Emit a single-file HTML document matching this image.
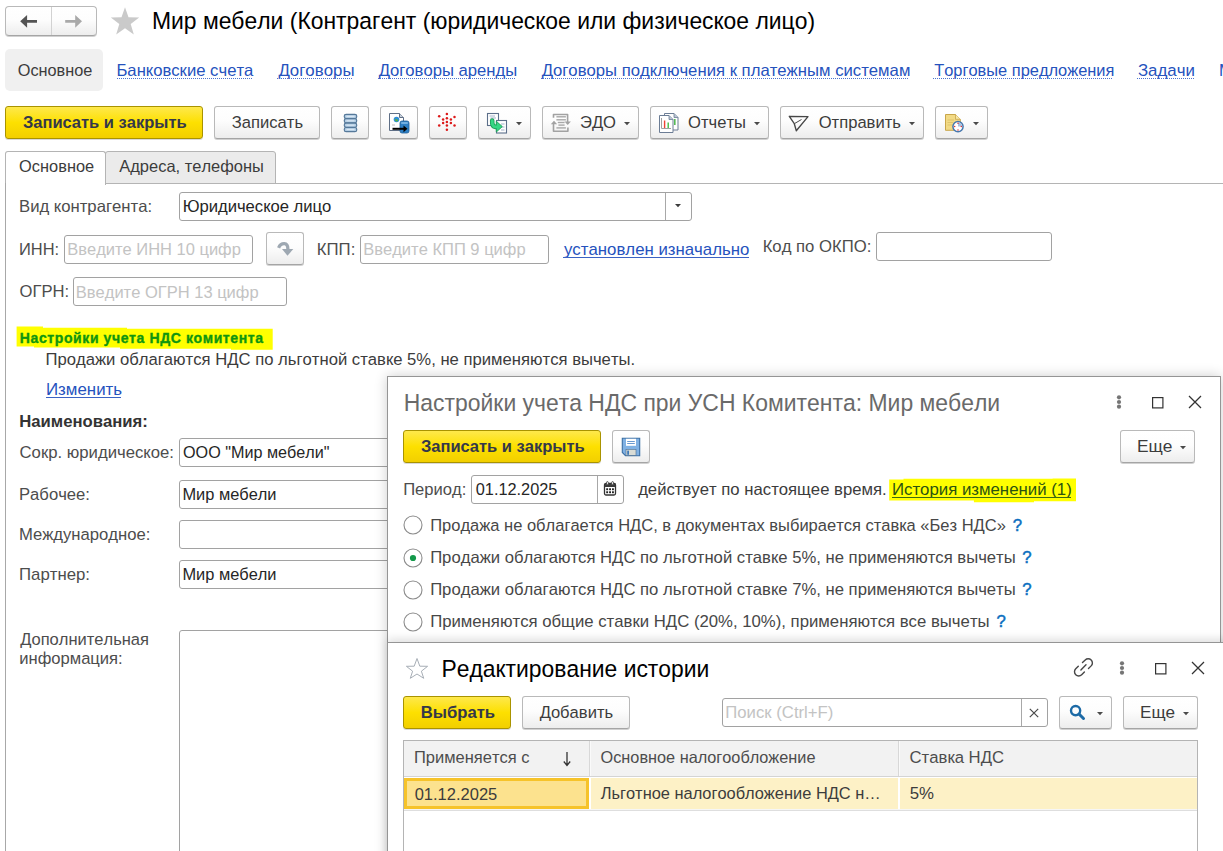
<!DOCTYPE html><html><head><meta charset="utf-8"><style>
*{margin:0;padding:0}
html,body{width:1223px;height:851px;overflow:hidden;background:#fff;position:relative}
body{font-family:"Liberation Sans",sans-serif}
.t{position:absolute;line-height:20px;white-space:nowrap;font-kerning:none}
.bn{position:absolute;box-sizing:border-box;border:1px solid #b9b9b9;border-bottom-color:#a5a5a5;border-radius:3px;background:linear-gradient(#ffffff 0%,#fdfdfd 45%,#ededed 100%);box-shadow:0 1px 0 rgba(0,0,0,0.18)}
.by{position:absolute;box-sizing:border-box;border:1px solid #a99300;border-radius:3px;background:linear-gradient(#fee84c 0%,#fde000 50%,#f2cf00 100%);box-shadow:0 1px 0 rgba(0,0,0,0.15)}
.fld{position:absolute;box-sizing:border-box;border:1px solid #a2a2a2;border-radius:3px;background:#fff}
.dlg{position:absolute;box-sizing:border-box;border:1px solid #959595;background:#fff;box-shadow:0 0 12px rgba(0,0,0,0.2)}
.dlg2{position:absolute;box-sizing:border-box;border:1px solid #959595;background:#fff;box-shadow:0 -3px 9px rgba(0,0,0,0.13)}
svg{position:absolute;overflow:visible}
</style></head><body>
<div class="bn" style="position:absolute;left:5px;top:6px;width:92px;height:30px;border-radius:4px"></div>
<div style="position:absolute;left:51px;top:7px;width:1px;height:28px;background:#d2d2d2"></div>
<svg style="position:absolute;left:19px;top:14px;" width="20" height="15" viewBox="0 0 20 15"><path d="M1.2 7.3 L8.1 1 L8.1 5.9 L18 5.9 L18 8.7 L8.1 8.7 L8.1 13.8 Z" fill="#545454"/></svg>
<svg style="position:absolute;left:64px;top:14px;" width="20" height="15" viewBox="0 0 20 15"><path d="M18 7.3 L11.2 1 L11.2 5.9 L1.2 5.9 L1.2 8.7 L11.2 8.7 L11.2 13.8 Z" fill="#a9a9a9"/></svg>
<svg style="position:absolute;left:110px;top:7px;" width="30" height="28" viewBox="0 0 30 28"><path d="M15 0.3 L18.5 10.2 L29.2 10.4 L20.7 16.9 L23.8 27.5 L15 21.2 L6.2 27.5 L9.3 16.9 L0.8 10.4 L11.5 10.2 Z" fill="#cacaca"/></svg>
<div class="t" style="left:151.92px;top:11px;font-size:22.911px;color:#000;font-weight:400;transform:scaleY(1.08);transform-origin:0 18px;">Мир мебели (Контрагент (юридическое или физическое лицо)</div>
<div style="position:absolute;left:5px;top:49px;width:98px;height:42px;background:#f0f0f0;border-radius:5px"></div>
<div class="t" style="left:17.73px;top:60px;font-size:16.302px;color:#3c3c3c;font-weight:400;">Основное</div>
<div class="t" style="left:116.43px;top:61px;font-size:16.681px;color:#2552bd;font-weight:400;">Банковские счета</div>
<div style="position:absolute;left:117px;top:78px;width:136px;height:1px;background-image:linear-gradient(90deg,#4d74d0 50%,transparent 50%);background-size:2px 1px"></div>
<div class="t" style="left:278.48px;top:61px;font-size:16.847px;color:#2552bd;font-weight:400;">Договоры</div>
<div style="position:absolute;left:277px;top:78px;width:76px;height:1px;background-image:linear-gradient(90deg,#4d74d0 50%,transparent 50%);background-size:2px 1px"></div>
<div class="t" style="left:378.68px;top:61px;font-size:16.661px;color:#2552bd;font-weight:400;">Договоры аренды</div>
<div style="position:absolute;left:378px;top:78px;width:138px;height:1px;background-image:linear-gradient(90deg,#4d74d0 50%,transparent 50%);background-size:2px 1px"></div>
<div class="t" style="left:541.68px;top:61px;font-size:16.715px;color:#2552bd;font-weight:400;">Договоры подключения к платежным системам</div>
<div style="position:absolute;left:541px;top:78px;width:368px;height:1px;background-image:linear-gradient(90deg,#4d74d0 50%,transparent 50%);background-size:2px 1px"></div>
<div class="t" style="left:934.23px;top:60px;font-size:16.418px;color:#2552bd;font-weight:400;">Торговые предложения</div>
<div style="position:absolute;left:933px;top:78px;width:180px;height:1px;background-image:linear-gradient(90deg,#4d74d0 50%,transparent 50%);background-size:2px 1px"></div>
<div class="t" style="left:1137.95px;top:61px;font-size:16.873px;color:#2552bd;font-weight:400;">Задачи</div>
<div style="position:absolute;left:1137px;top:78px;width:57px;height:1px;background-image:linear-gradient(90deg,#4d74d0 50%,transparent 50%);background-size:2px 1px"></div>
<div class="t" style="left:1219.03px;top:61px;font-size:16.750px;color:#2552bd;font-weight:400;">Мониторинг</div>
<div class="by" style="position:absolute;left:5px;top:106px;width:198px;height:33px;"></div>
<div class="t" style="left:22.93px;top:113px;font-size:16.532px;color:#34384a;font-weight:700;">Записать и закрыть</div>
<div class="bn" style="position:absolute;left:214px;top:106px;width:106px;height:33px;"></div>
<div class="t" style="left:231.86px;top:113px;font-size:16.581px;color:#3c3c3c;font-weight:400;">Записать</div>
<div class="bn" style="position:absolute;left:331px;top:106px;width:38px;height:33px;"></div>
<div class="bn" style="position:absolute;left:380px;top:106px;width:38px;height:33px;"></div>
<div class="bn" style="position:absolute;left:429px;top:106px;width:38px;height:33px;"></div>
<div class="bn" style="position:absolute;left:478px;top:106px;width:53px;height:33px;"></div>
<div class="bn" style="position:absolute;left:542px;top:106px;width:97px;height:33px;"></div>
<div class="bn" style="position:absolute;left:650px;top:106px;width:119px;height:33px;"></div>
<div class="bn" style="position:absolute;left:780px;top:106px;width:144px;height:33px;"></div>
<div class="bn" style="position:absolute;left:935px;top:106px;width:53px;height:33px;"></div>
<div class="t" style="left:579.95px;top:113px;font-size:16.629px;color:#3c3c3c;font-weight:400;">ЭДО</div>
<div class="t" style="left:688.01px;top:113px;font-size:16.602px;color:#3c3c3c;font-weight:400;">Отчеты</div>
<div class="t" style="left:818.71px;top:113px;font-size:16.591px;color:#3c3c3c;font-weight:400;">Отправить</div>
<svg style="position:absolute;left:516px;top:122px;" width="6" height="4" viewBox="0 0 6 4"><path d="M0 0 H6 L3 3.2 Z" fill="#4a4a4a"/></svg>
<svg style="position:absolute;left:624px;top:122px;" width="6" height="4" viewBox="0 0 6 4"><path d="M0 0 H6 L3 3.2 Z" fill="#4a4a4a"/></svg>
<svg style="position:absolute;left:754px;top:122px;" width="6" height="4" viewBox="0 0 6 4"><path d="M0 0 H6 L3 3.2 Z" fill="#4a4a4a"/></svg>
<svg style="position:absolute;left:909px;top:122px;" width="6" height="4" viewBox="0 0 6 4"><path d="M0 0 H6 L3 3.2 Z" fill="#4a4a4a"/></svg>
<svg style="position:absolute;left:973px;top:122px;" width="6" height="4" viewBox="0 0 6 4"><path d="M0 0 H6 L3 3.2 Z" fill="#4a4a4a"/></svg>
<svg style="position:absolute;left:343px;top:113px;" width="15" height="20" viewBox="0 0 15 20"><rect x="1.3" y="1.3" width="12.4" height="4.2" rx="1.8" fill="#b3cde3" stroke="#56799a" stroke-width="1.2"/><path d="M3.5 3.4 H11.5" stroke="#dfeaf5" stroke-width="1"/><rect x="1.3" y="5.7" width="12.4" height="4.2" rx="1.8" fill="#b3cde3" stroke="#56799a" stroke-width="1.2"/><path d="M3.5 7.8 H11.5" stroke="#dfeaf5" stroke-width="1"/><rect x="1.3" y="10.1" width="12.4" height="4.2" rx="1.8" fill="#b3cde3" stroke="#56799a" stroke-width="1.2"/><path d="M3.5 12.2 H11.5" stroke="#dfeaf5" stroke-width="1"/><rect x="1.3" y="14.5" width="12.4" height="4.2" rx="1.8" fill="#b3cde3" stroke="#56799a" stroke-width="1.2"/><path d="M3.5 16.6 H11.5" stroke="#dfeaf5" stroke-width="1"/></svg>
<svg style="position:absolute;left:388px;top:112px;" width="23" height="22" viewBox="0 0 23 22"><path d="M1.5 1.5 H11.5 L15.5 5.5 V18.5 H1.5 Z" fill="#fff" stroke="#5f6f86" stroke-width="1"/><path d="M11.5 1.5 V5.5 H15.5" fill="#c8d0da" stroke="#5f6f86" stroke-width="1"/><circle cx="8.5" cy="7.5" r="2.8" fill="#2f8fd8"/><path d="M7 6.5 Q8.5 8 10 7.2 L9.6 9.5 Q8 9.8 7.2 8.8Z" fill="#5cb33a"/><path d="M4 13 H7" stroke="#aaa" stroke-width="0.8"/><rect x="12" y="9" width="9" height="12" rx="2" fill="#2d7fc4" stroke="#1e5f99" stroke-width="0.8"/><path d="M13.2 11 H19.8" stroke="#9fd0f5" stroke-width="1.2"/><path d="M4.5 16.8 H16.5" stroke="#000" stroke-width="2"/><path d="M15.5 13.5 L19.5 16.8 L15.5 20.2 Z" fill="#000"/></svg>
<svg style="position:absolute;left:0px;top:0px;" width="1" height="1" viewBox="0 0 1 1"><circle cx="446.9" cy="114.1" r="1.25" fill="#dc1a1a"/><circle cx="439.2" cy="116.3" r="1.25" fill="#dc1a1a"/><circle cx="454.5" cy="116.9" r="1.25" fill="#dc1a1a"/><circle cx="443.1" cy="119.4" r="1.25" fill="#dc1a1a"/><circle cx="446.9" cy="118.2" r="1.25" fill="#dc1a1a"/><circle cx="450.9" cy="119.4" r="1.25" fill="#dc1a1a"/><circle cx="443.1" cy="123.1" r="1.25" fill="#dc1a1a"/><circle cx="446.9" cy="121.9" r="1.25" fill="#dc1a1a"/><circle cx="450.9" cy="123.1" r="1.25" fill="#dc1a1a"/><circle cx="439.2" cy="125.6" r="1.25" fill="#dc1a1a"/><circle cx="454.5" cy="125.6" r="1.25" fill="#dc1a1a"/><circle cx="446.9" cy="125.6" r="1.25" fill="#dc1a1a"/><circle cx="446.9" cy="129.7" r="1.25" fill="#dc1a1a"/></svg>
<svg style="position:absolute;left:486px;top:112px;" width="22" height="22" viewBox="0 0 22 22"><rect x="1.5" y="1.5" width="11" height="12" fill="#fff" stroke="#5c6f8a" stroke-width="1.1"/><path d="M3.5 4 H9 M4.5 6 H10" stroke="#8aa0bb" stroke-width="0.8"/><rect x="10.5" y="8.5" width="10" height="12.5" fill="#fff" stroke="#5c6f8a" stroke-width="1.1"/><path d="M15 12 H18.5 M15 15 H18.5 M15 18 H18.5" stroke="#8aa0bb" stroke-width="0.8"/><path d="M6.2 8.6 Q5.8 14.6 9.6 14.9 L11.5 14.9" fill="none" stroke="#1f9f5a" stroke-width="4.6" stroke-linecap="round"/><path d="M10.3 9.2 L16.3 14.6 L10.3 20 Z" fill="#35d784" stroke="#1f9f5a" stroke-width="0.9" stroke-linejoin="round"/><path d="M6.2 8.6 Q5.8 14.6 9.6 14.9 L11.8 14.9" fill="none" stroke="#35d784" stroke-width="2.8" stroke-linecap="round"/></svg>
<svg style="position:absolute;left:549px;top:112px;" width="24" height="22" viewBox="0 0 24 22"><g fill="none" stroke="#a2a2a2" stroke-width="1.6" stroke-linejoin="round"><path d="M4.5 5.8 V2.5 H18.6 V9.9"/><path d="M4.5 12 V19.2 H18.9 V15.6"/></g><path d="M15.5 9.6 H21.9 L18.7 12.9 Z" fill="#a2a2a2"/><path d="M1.8 12.2 L5 8.8 L8.2 12.2 Z" fill="#a2a2a2"/><g stroke="#a8a8a8" stroke-width="1.4"><path d="M7.4 4.8 H16.9"/><path d="M7.4 7.8 H16.9"/><path d="M8.8 10.5 H15.6"/><path d="M9.4 13.1 H15.6"/><path d="M7.4 15.9 H16.9"/></g></svg>
<svg style="position:absolute;left:658px;top:112px;" width="22" height="22" viewBox="0 0 22 22"><path d="M6.5 1.5 H16 L20 5.5 V18 H6.5 Z" fill="#fff" stroke="#6c7d95" stroke-width="1"/><path d="M16 1.5 V5.5 H20" fill="#b9c4d2" stroke="#6c7d95" stroke-width="0.8"/><path d="M1.5 3.5 H11 L15 7.5 V20.5 H1.5 Z" fill="#fff" stroke="#6c7d95" stroke-width="1"/><path d="M11 3.5 V7.5 H15" fill="#b9c4d2" stroke="#6c7d95" stroke-width="0.8"/><path d="M3.5 6 V16.5 H13" fill="none" stroke="#a0a0a0" stroke-width="1"/><path d="M6.6 8.5 V16" stroke="#ee4433" stroke-width="1.4"/><path d="M10.2 10.5 V16" stroke="#44bb44" stroke-width="1.4"/><path d="M16.8 7 V13" stroke="#55bb55" stroke-width="1.6"/></svg>
<svg style="position:absolute;left:787px;top:114px;" width="24" height="19" viewBox="0 0 24 19"><path d="M2.3 2.3 L21 2.6 L9.3 16.8 L7.3 9.7 Z" fill="none" stroke="#474747" stroke-width="1.35" stroke-linejoin="round"/><path d="M7.3 9.7 L14.5 5.5" stroke="#474747" stroke-width="1"/></svg>
<svg style="position:absolute;left:944px;top:113px;" width="22" height="22" viewBox="0 0 22 22"><path d="M1.5 1.5 H11.5 L16.3 6.3 V17.3 H1.5 Z" fill="#f2da85" stroke="#c8a54a" stroke-width="1"/><path d="M11.5 1.5 V6.3 H16.3" fill="#f7e7a8" stroke="#c8a54a" stroke-width="0.8"/><path d="M3.5 7 H10 M3.5 9.5 H9 M3.5 12 H8" stroke="#d9bf66" stroke-width="0.8"/><circle cx="14" cy="13.6" r="5.1" fill="#fff" stroke="#4677ad" stroke-width="1.5"/><path d="M14 13.6 V9.6 A4 4 0 0 1 18 13.6 Z" fill="#a5c0e0"/><circle cx="14" cy="10.3" r="0.75" fill="#e03030"/><circle cx="14" cy="16.9" r="0.75" fill="#e03030"/><circle cx="10.7" cy="13.6" r="0.75" fill="#e03030"/><circle cx="17.3" cy="13.6" r="0.75" fill="#e03030"/></svg>
<div style="position:absolute;left:105px;top:151px;width:171px;height:33px;background:#ebebeb;border:1px solid #b4b4b4;box-sizing:border-box;border-radius:3px 3px 0 0"></div>
<div style="position:absolute;left:275px;top:183px;width:948px;height:1px;background:#b4b4b4"></div>
<div style="position:absolute;left:5px;top:151px;width:101px;height:34px;background:#fff;border:1px solid #b4b4b4;border-bottom:none;box-sizing:border-box;border-radius:3px 3px 0 0"></div>
<div style="position:absolute;left:5px;top:183px;width:1px;height:668px;background:#a8a8a8"></div>
<div class="t" style="left:19.12px;top:156px;font-size:16.391px;color:#3c3c3c;font-weight:400;">Основное</div>
<div class="t" style="left:119.27px;top:156px;font-size:16.481px;color:#3c3c3c;font-weight:400;">Адреса, телефоны</div>
<div class="t" style="left:19.03px;top:197px;font-size:16.703px;color:#4d4d4d;font-weight:400;">Вид контрагента:</div>
<div class="fld" style="position:absolute;left:179px;top:192px;width:513px;height:29px;"></div>
<div style="position:absolute;left:665px;top:193px;width:1px;height:27px;background:#a8a8a8"></div>
<svg style="position:absolute;left:675px;top:204px;" width="6" height="4" viewBox="0 0 6 4"><path d="M0 0 H6 L3 3.2 Z" fill="#3c3c3c"/></svg>
<div class="t" style="left:182.63px;top:197px;font-size:16.646px;color:#262626;font-weight:400;">Юридическое лицо</div>
<div class="t" style="left:19.05px;top:239px;font-size:16.449px;color:#4d4d4d;font-weight:400;">ИНН:</div>
<div class="fld" style="position:absolute;left:64px;top:235px;width:189px;height:29px;"></div>
<div class="t" style="left:67.25px;top:239px;font-size:16.491px;color:#c3c3c3;font-weight:400;">Введите ИНН 10 цифр</div>
<div class="bn" style="position:absolute;left:266px;top:232px;width:38px;height:33px;"></div>
<svg style="position:absolute;left:277px;top:240px;" width="18" height="17" viewBox="0 0 18 17"><path d="M1.6 7.8 Q3.4 3.6 7.3 3.7 Q10.9 3.9 10.9 9.2" fill="none" stroke="#9ea8b2" stroke-width="3.3"/><path d="M5 8.9 L16.3 8.9 L10.5 15.8 Z" fill="#9ea8b2"/></svg>
<div class="t" style="left:316.83px;top:240px;font-size:16.757px;color:#4d4d4d;font-weight:400;">КПП:</div>
<div class="fld" style="position:absolute;left:360px;top:235px;width:189px;height:29px;"></div>
<div class="t" style="left:363.24px;top:240px;font-size:16.535px;color:#c3c3c3;font-weight:400;">Введите КПП 9 цифр</div>
<div class="t" style="left:563.96px;top:240px;font-size:16.808px;color:#2552bd;font-weight:400;">установлен изначально</div>
<div style="position:absolute;left:563px;top:257px;width:186px;height:1px;background:#3a62c4"></div>
<div class="t" style="left:762.63px;top:237px;font-size:16.696px;color:#4d4d4d;font-weight:400;">Код по ОКПО:</div>
<div class="fld" style="position:absolute;left:876px;top:232px;width:176px;height:29px;"></div>
<div class="t" style="left:19.51px;top:282px;font-size:16.645px;color:#4d4d4d;font-weight:400;">ОГРН:</div>
<div class="fld" style="position:absolute;left:73px;top:277px;width:214px;height:29px;"></div>
<div class="t" style="left:75.84px;top:282px;font-size:16.519px;color:#c3c3c3;font-weight:400;">Введите ОГРН 13 цифр</div>
<svg style="position:absolute;left:0px;top:0px;" width="1" height="1" viewBox="0 0 1 1"><path d="M16.6 326.6 H43 V327.7 H127 V328.8 H272.7 V349.8 H231 V348.7 H120 V347.6 H34 V346.5 H16.6 Z" fill="#ffff00"/></svg>
<div class="t" style="left:19.86px;top:328px;font-size:14.000px;color:#0f960f;font-weight:700;letter-spacing:0.6px;-webkit-text-stroke:0.35px #0f960f;">Настройки учета НДС комитента</div>
<div class="t" style="left:45.45px;top:350px;font-size:16.662px;color:#3c3c3c;font-weight:400;">Продажи облагаются НДС по льготной ставке 5%, не применяются вычеты.</div>
<div class="t" style="left:46.01px;top:380px;font-size:16.888px;color:#2552bd;font-weight:400;">Изменить</div>
<div style="position:absolute;left:46px;top:397px;width:75px;height:1px;background:#3a62c4"></div>
<div class="t" style="left:19.28px;top:412px;font-size:16.682px;color:#333;font-weight:700;">Наименования:</div>
<div class="t" style="left:19.55px;top:443px;font-size:16.719px;color:#4d4d4d;font-weight:400;">Сокр. юридическое:</div>
<div class="fld" style="position:absolute;left:179px;top:438px;width:252px;height:29px;"></div>
<div class="t" style="left:183.03px;top:442px;font-size:16.162px;color:#262626;font-weight:400;">ООО &quot;Мир мебели&quot;</div>
<div class="t" style="left:19.03px;top:485px;font-size:16.651px;color:#4d4d4d;font-weight:400;">Рабочее:</div>
<div class="fld" style="position:absolute;left:179px;top:480px;width:252px;height:29px;"></div>
<div class="t" style="left:182.45px;top:484px;font-size:16.408px;color:#262626;font-weight:400;">Мир мебели</div>
<div class="t" style="left:19.03px;top:525px;font-size:16.669px;color:#4d4d4d;font-weight:400;">Международное:</div>
<div class="fld" style="position:absolute;left:179px;top:520px;width:252px;height:29px;"></div>
<div class="t" style="left:19.04px;top:565px;font-size:16.777px;color:#4d4d4d;font-weight:400;">Партнер:</div>
<div class="fld" style="position:absolute;left:179px;top:560px;width:252px;height:29px;"></div>
<div class="t" style="left:182.45px;top:564px;font-size:16.408px;color:#262626;font-weight:400;">Мир мебели</div>
<div class="t" style="left:20.28px;top:630px;font-size:16.534px;color:#4d4d4d;font-weight:400;">Дополнительная</div>
<div class="t" style="left:19.25px;top:649px;font-size:16.580px;color:#4d4d4d;font-weight:400;">информация:</div>
<div class="fld" style="position:absolute;left:179px;top:630px;width:252px;height:271px;"></div>
<div class="dlg" style="position:absolute;left:387px;top:376px;width:834px;height:525px;"></div>
<div class="t" style="left:403.72px;top:393px;font-size:22.943px;color:#6a6a6a;font-weight:400;transform:scaleY(1.08);transform-origin:0 18px;">Настройки учета НДС при УСН Комитента: Мир мебели</div>
<svg style="position:absolute;left:1115px;top:395px;" width="8" height="14" viewBox="0 0 8 14"><circle cx="4" cy="2.3" r="2.1" fill="#757575"/><circle cx="4" cy="7" r="2.1" fill="#757575"/><circle cx="4" cy="11.7" r="2.1" fill="#757575"/></svg>
<svg style="position:absolute;left:1150px;top:395px;" width="15" height="15" viewBox="0 0 15 15"><rect x="2.6" y="2.6" width="10.3" height="10.3" fill="none" stroke="#333" stroke-width="1.2"/></svg>
<svg style="position:absolute;left:1187px;top:394px;" width="16" height="16" viewBox="0 0 16 16"><path d="M2 2 L14 14 M14 2 L2 14" stroke="#333" stroke-width="1.25"/></svg>
<div class="by" style="position:absolute;left:403px;top:430px;width:198px;height:33px;"></div>
<div class="t" style="left:420.93px;top:437px;font-size:16.522px;color:#34384a;font-weight:700;">Записать и закрыть</div>
<div class="bn" style="position:absolute;left:612px;top:430px;width:38px;height:33px;"></div>
<svg style="position:absolute;left:621px;top:437px;" width="20" height="20" viewBox="0 0 20 20"><path d="M1.3 1.3 H18.7 V18.7 H4.5 L1.3 15.5 Z" fill="#80b1e3" stroke="#3b6fa5" stroke-width="1.1"/><rect x="5" y="1.8" width="10" height="7" fill="#fff"/><path d="M6.2 4.5 H13.8 M6.2 6.5 H13.8" stroke="#6b9ad0" stroke-width="1"/><rect x="5" y="12.3" width="10" height="6" fill="#d9dcd6" stroke="#4a6b8e" stroke-width="0.6"/><rect x="6.2" y="13.6" width="1.8" height="4.2" fill="#3f79b8"/></svg>
<div class="bn" style="position:absolute;left:1120px;top:430px;width:75px;height:33px;"></div>
<div class="t" style="left:1136.88px;top:436px;font-size:17.349px;color:#3c3c3c;font-weight:400;">Еще</div>
<svg style="position:absolute;left:1180px;top:446px;" width="6" height="4" viewBox="0 0 6 4"><path d="M0 0 H6 L3 3.2 Z" fill="#4a4a4a"/></svg>
<div class="t" style="left:403.16px;top:480px;font-size:16.590px;color:#4d4d4d;font-weight:400;">Период:</div>
<div class="fld" style="position:absolute;left:471px;top:475px;width:153px;height:29px;"></div>
<div style="position:absolute;left:597px;top:476px;width:1px;height:27px;background:#a8a8a8"></div>
<div class="t" style="left:475.76px;top:479px;font-size:16.329px;color:#262626;font-weight:400;">01.12.2025</div>
<svg style="position:absolute;left:603px;top:481px;" width="14" height="15" viewBox="0 0 14 15"><rect x="1.5" y="2.5" width="11" height="11.5" rx="1.5" fill="#fff" stroke="#333" stroke-width="1.3"/><rect x="1.5" y="2.5" width="11" height="3.5" fill="#3a3a3a"/><rect x="3.5" y="0.6" width="1.8" height="3.2" rx="0.9" fill="#fff" stroke="#333" stroke-width="0.8"/><rect x="8.7" y="0.6" width="1.8" height="3.2" rx="0.9" fill="#fff" stroke="#333" stroke-width="0.8"/><rect x="3.2" y="7.3" width="1.9" height="1.9" fill="#222"/><rect x="3.2" y="10.3" width="1.9" height="1.9" fill="#222"/><rect x="6.1" y="7.3" width="1.9" height="1.9" fill="#222"/><rect x="6.1" y="10.3" width="1.9" height="1.9" fill="#222"/><rect x="9.0" y="7.3" width="1.9" height="1.9" fill="#222"/><rect x="9.0" y="10.3" width="1.9" height="1.9" fill="#222"/></svg>
<div class="t" style="left:638.14px;top:480px;font-size:16.717px;color:#3c3c3c;font-weight:400;">действует по настоящее время.</div>
<svg style="position:absolute;left:0px;top:0px;" width="1" height="1" viewBox="0 0 1 1"><path d="M889.2 479.5 H903.5 V478.7 H1052.6 V478.4 H1076 V501.3 H1034 V502.2 H973.9 V500.5 H889.2 Z" fill="#ffff00"/></svg>
<div class="t" style="left:891.92px;top:480px;font-size:16.806px;color:#2b5410;font-weight:400;">История изменений (1)</div>
<div style="position:absolute;left:892px;top:497px;width:179px;height:1px;background:#3d6a12"></div>
<svg style="position:absolute;left:403.4px;top:515.4px;" width="20" height="20" viewBox="0 0 20 20"><circle cx="10" cy="10" r="9" fill="#fff" stroke="#8c8c8c" stroke-width="1.1"/></svg>
<div class="t" style="left:430.16px;top:516px;font-size:16.532px;color:#474747;font-weight:400;">Продажа не облагается НДС, в документах выбирается ставка «Без НДС»</div>
<div class="t" style="left:1012.81px;top:516px;font-size:16.750px;color:#0b6fc0;font-weight:400;-webkit-text-stroke:0.5px #0b6fc0;">?</div>
<svg style="position:absolute;left:403.4px;top:547.5px;" width="20" height="20" viewBox="0 0 20 20"><circle cx="10" cy="10" r="9" fill="#fff" stroke="#8c8c8c" stroke-width="1.1"/><circle cx="10" cy="10" r="3.1" fill="#13994a"/></svg>
<div class="t" style="left:430.15px;top:548px;font-size:16.684px;color:#474747;font-weight:400;">Продажи облагаются НДС по льготной ставке 5%, не применяются вычеты</div>
<div class="t" style="left:1022.31px;top:548px;font-size:16.750px;color:#0b6fc0;font-weight:400;-webkit-text-stroke:0.5px #0b6fc0;">?</div>
<svg style="position:absolute;left:403.4px;top:579.5px;" width="20" height="20" viewBox="0 0 20 20"><circle cx="10" cy="10" r="9" fill="#fff" stroke="#8c8c8c" stroke-width="1.1"/></svg>
<div class="t" style="left:430.15px;top:580px;font-size:16.684px;color:#474747;font-weight:400;">Продажи облагаются НДС по льготной ставке 7%, не применяются вычеты</div>
<div class="t" style="left:1022.31px;top:580px;font-size:16.750px;color:#0b6fc0;font-weight:400;-webkit-text-stroke:0.5px #0b6fc0;">?</div>
<svg style="position:absolute;left:403.4px;top:611.6px;" width="20" height="20" viewBox="0 0 20 20"><circle cx="10" cy="10" r="9" fill="#fff" stroke="#8c8c8c" stroke-width="1.1"/></svg>
<div class="t" style="left:430.14px;top:612px;font-size:16.745px;color:#474747;font-weight:400;">Применяются общие ставки НДС (20%, 10%), применяются все вычеты</div>
<div class="t" style="left:996.51px;top:612px;font-size:16.750px;color:#0b6fc0;font-weight:400;-webkit-text-stroke:0.5px #0b6fc0;">?</div>
<div class="dlg2" style="position:absolute;left:387px;top:642px;width:914px;height:259px;"></div>
<svg style="position:absolute;left:405px;top:657px;" width="24" height="22" viewBox="0 0 24 22"><path d="M12 1.5 L14.8 9.2 L22.6 9.3 L16.4 14.2 L18.7 21.3 L12 17 L5.3 21.3 L7.6 14.2 L1.4 9.3 L9.2 9.2 Z" fill="none" stroke="#a7aeb6" stroke-width="1"/></svg>
<div class="t" style="left:441.52px;top:659px;font-size:22.880px;color:#000;font-weight:400;transform:scaleY(1.08);transform-origin:0 18px;">Редактирование истории</div>
<svg style="position:absolute;left:1070px;top:654px;" width="28" height="26" viewBox="0 0 28 26"><g fill="none" stroke="#474747" stroke-width="1.4" stroke-linecap="round"><path d="M8.3 12.2 L5.73 14.83 A4.2 4.2 0 0 0 11.67 20.77 L14.4 18.0"/><path d="M12.5 8.6 L15.23 5.93 A4.2 4.2 0 0 1 21.17 11.87 L18.5 14.5"/><path d="M10.9 16.0 L16.0 10.7"/></g></svg>
<svg style="position:absolute;left:1118px;top:661px;" width="8" height="14" viewBox="0 0 8 14"><circle cx="4" cy="2.3" r="2.1" fill="#757575"/><circle cx="4" cy="7" r="2.1" fill="#757575"/><circle cx="4" cy="11.7" r="2.1" fill="#757575"/></svg>
<svg style="position:absolute;left:1153px;top:661px;" width="15" height="15" viewBox="0 0 15 15"><rect x="2.6" y="2.6" width="10.3" height="10.3" fill="none" stroke="#333" stroke-width="1.2"/></svg>
<svg style="position:absolute;left:1190px;top:660px;" width="16" height="16" viewBox="0 0 16 16"><path d="M2 2 L14 14 M14 2 L2 14" stroke="#333" stroke-width="1.25"/></svg>
<div class="by" style="position:absolute;left:403px;top:696px;width:108px;height:33px;"></div>
<div class="t" style="left:420.69px;top:703px;font-size:16.663px;color:#34384a;font-weight:700;">Выбрать</div>
<div class="bn" style="position:absolute;left:522px;top:696px;width:108px;height:33px;"></div>
<div class="t" style="left:539.68px;top:703px;font-size:16.588px;color:#3c3c3c;font-weight:400;">Добавить</div>
<div class="fld" style="position:absolute;left:722px;top:698px;width:326px;height:29px;"></div>
<div style="position:absolute;left:1021px;top:699px;width:1px;height:27px;background:#a8a8a8"></div>
<div class="t" style="left:725.34px;top:703px;font-size:16.720px;color:#c3c3c3;font-weight:400;">Поиск (Ctrl+F)</div>
<svg style="position:absolute;left:1027.5px;top:706.5px;" width="12" height="12" viewBox="0 0 12 12"><path d="M1.8 1.8 L10.2 10.2 M10.2 1.8 L1.8 10.2" stroke="#4a4a4a" stroke-width="1.2"/></svg>
<div class="bn" style="position:absolute;left:1059px;top:696px;width:53px;height:33px;"></div>
<svg style="position:absolute;left:1068px;top:703px;" width="20" height="20" viewBox="0 0 20 20"><circle cx="7.6" cy="7.6" r="4.6" fill="none" stroke="#1d6aa6" stroke-width="2.4"/><path d="M11 11 L15.5 15.5" stroke="#1d6aa6" stroke-width="3" stroke-linecap="round"/></svg>
<svg style="position:absolute;left:1097px;top:712px;" width="6" height="4" viewBox="0 0 6 4"><path d="M0 0 H6 L3 3.2 Z" fill="#4a4a4a"/></svg>
<div class="bn" style="position:absolute;left:1123px;top:696px;width:75px;height:33px;"></div>
<div class="t" style="left:1139.99px;top:702px;font-size:17.140px;color:#3c3c3c;font-weight:400;">Еще</div>
<svg style="position:absolute;left:1183px;top:712px;" width="6" height="4" viewBox="0 0 6 4"><path d="M0 0 H6 L3 3.2 Z" fill="#4a4a4a"/></svg>
<div style="position:absolute;left:403px;top:740px;width:795px;height:161px;border:1px solid #b4b4b4;box-sizing:border-box;background:#fff"></div>
<div style="position:absolute;left:404px;top:741px;width:793px;height:35px;background:#f2f2f2"></div>
<div style="position:absolute;left:589px;top:741px;width:1px;height:35px;background:#d8d8d8"></div>
<div style="position:absolute;left:590px;top:741px;width:1px;height:35px;background:#fafafa"></div>
<div style="position:absolute;left:898px;top:741px;width:1px;height:35px;background:#d8d8d8"></div>
<div style="position:absolute;left:899px;top:741px;width:1px;height:35px;background:#fafafa"></div>
<div style="position:absolute;left:404px;top:776px;width:793px;height:1px;background:#d4d4d4"></div>
<div class="t" style="left:413.96px;top:747px;font-size:16.500px;color:#4d4d4d;font-weight:400;">Применяется с</div>
<svg style="position:absolute;left:560px;top:750px;" width="14" height="18" viewBox="0 0 14 18"><path d="M7 2 V15.3 M3.8 11.5 L7 15.5 L10.2 11.5" stroke="#333" stroke-width="1.3" fill="none"/></svg>
<div class="t" style="left:600.53px;top:747px;font-size:16.316px;color:#4d4d4d;font-weight:400;">Основное налогообложение</div>
<div class="t" style="left:909.55px;top:748px;font-size:16.691px;color:#4d4d4d;font-weight:400;">Ставка НДС</div>
<div style="position:absolute;left:404px;top:778px;width:793px;height:31px;background:#fdf1c6"></div>
<div style="position:absolute;left:404px;top:778px;width:185px;height:31px;background:#fce28e;border:3px solid #f6c32a;box-sizing:border-box"></div>
<div style="position:absolute;left:589px;top:778px;width:2px;height:31px;background:#fff"></div>
<div style="position:absolute;left:898px;top:778px;width:2px;height:31px;background:#fff"></div>
<div style="position:absolute;left:404px;top:809px;width:793px;height:1px;background:#f6f6f6"></div>
<div style="position:absolute;left:404px;top:810px;width:793px;height:1px;background:#dedede"></div>
<div class="t" style="left:414.66px;top:784px;font-size:16.512px;color:#3c3c3c;font-weight:400;">01.12.2025</div>
<div class="t" style="left:600.66px;top:783px;font-size:16.437px;color:#3c3c3c;font-weight:400;">Льготное налогообложение НДС н…</div>
<div class="t" style="left:909.73px;top:784px;font-size:16.793px;color:#3c3c3c;font-weight:400;">5%</div>
</body></html>
